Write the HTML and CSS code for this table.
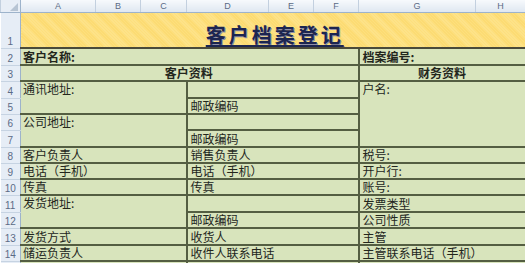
FILE: index.html
```html
<!DOCTYPE html>
<html lang="zh">
<head>
<meta charset="utf-8">
<title>客户档案登记</title>
<link rel="stylesheet" href="styles.css">
</head>
<body>
<table class="sheet">
  <colgroup>
    <col class="w-rh"><col class="w-a"><col class="w-b"><col class="w-c"><col class="w-d"><col class="w-e"><col class="w-f"><col class="w-g"><col class="w-h">
  </colgroup>
  <tr class="hdr">
    <th class="corner"><span class="tri"></span></th>
    <th>A</th><th>B</th><th>C</th><th>D</th><th>E</th><th>F</th><th>G</th><th>H</th>
  </tr>
  <tr class="r-title">
    <th class="rn">1</th>
    <td colspan="8" class="title"><span>客户档案登记</span></td>
  </tr>
  <tr class="h17">
    <th class="rn">2</th>
    <td colspan="6" class="nl bold">客户名称:</td>
    <td colspan="2" class="bold">档案编号:</td>
  </tr>
  <tr class="h16">
    <th class="rn">3</th>
    <td colspan="6" class="nl bold center">客户资料</td>
    <td colspan="2" class="bold center">财务资料</td>
  </tr>
  <tr class="h17">
    <th class="rn">4</th>
    <td colspan="3" rowspan="2" class="nl top">通讯地址:</td>
    <td colspan="3"></td>
    <td colspan="2" rowspan="4" class="top">户名:</td>
  </tr>
  <tr class="h16">
    <th class="rn">5</th>
    <td colspan="3">邮政编码</td>
  </tr>
  <tr class="h16">
    <th class="rn">6</th>
    <td colspan="3" rowspan="2" class="nl top">公司地址:</td>
    <td colspan="3" class="thin-b"></td>
  </tr>
  <tr class="h17">
    <th class="rn">7</th>
    <td colspan="3">邮政编码</td>
  </tr>
  <tr class="h16">
    <th class="rn">8</th>
    <td colspan="3" class="nl">客户负责人</td>
    <td colspan="3">销售负责人</td>
    <td colspan="2">税号:</td>
  </tr>
  <tr class="h16">
    <th class="rn">9</th>
    <td colspan="3" class="nl">电话（手机）</td>
    <td colspan="3">电话（手机）</td>
    <td colspan="2">开户行:</td>
  </tr>
  <tr class="h16">
    <th class="rn">10</th>
    <td colspan="3" class="nl">传真</td>
    <td colspan="3">传真</td>
    <td colspan="2">账号:</td>
  </tr>
  <tr class="h17">
    <th class="rn">11</th>
    <td colspan="3" rowspan="2" class="nl top">发货地址:</td>
    <td colspan="3"></td>
    <td colspan="2">发票类型</td>
  </tr>
  <tr class="h16">
    <th class="rn">12</th>
    <td colspan="3">邮政编码</td>
    <td colspan="2">公司性质</td>
  </tr>
  <tr class="h17">
    <th class="rn">13</th>
    <td colspan="3" class="nl">发货方式</td>
    <td colspan="3">收货人</td>
    <td colspan="2">主管</td>
  </tr>
  <tr class="h16">
    <th class="rn">14</th>
    <td colspan="3" class="nl">储运负责人</td>
    <td colspan="3">收件人联系电话</td>
    <td colspan="2">主管联系电话（手机）</td>
  </tr>
  <tr class="h16">
    <th class="rn"></th>
    <td colspan="3" class="nl"></td>
    <td colspan="3"></td>
    <td colspan="2"></td>
  </tr>
</table>
</body>
</html>
```

FILE: styles.css
```css
html, body {
  margin: 0;
  padding: 0;
  background: #ffffff;
  overflow: hidden;
  width: 525px;
  height: 263px;
}

.sheet {
  border-collapse: collapse;
  table-layout: fixed;
  width: 525px;
  font-family: "Noto Sans CJK SC", "Noto Sans", sans-serif;
  font-size: 12px;
  color: #23261c;
}

.w-rh { width: 20px; }
.w-a { width: 75px; }
.w-b { width: 45px; }
.w-c { width: 46px; }
.w-d { width: 82px; }
.w-e { width: 45px; }
.w-f { width: 45px; }
.w-g { width: 117px; }
.w-h { width: 50px; }

/* column header row */
.hdr { height: 12px; }
.hdr th {
  padding: 0;
  height: 11px;
  font-family: "Liberation Sans", sans-serif;
  font-weight: normal;
  font-size: 9px;
  line-height: 10px;
  color: #5b6b86;
  text-align: center;
  background: linear-gradient(#f7f9fc, #dfe7f1);
  border-left: 1px solid #c3d0df;
  border-right: 1px solid #c3d0df;
  border-bottom: 1px solid #9db3cb;
}

.hdr th.corner {
  position: relative;
  background: #e8eef6;
  border-right: 1px solid #9db3cb;
}

.tri {
  position: absolute;
  right: 2px;
  bottom: 1px;
  width: 0;
  height: 0;
  border-left: 8px solid transparent;
  border-bottom: 8px solid #b7c4d3;
}

/* row numbers */
th.rn {
  padding: 0 0 1px 0;
  font-family: "Liberation Sans", sans-serif;
  font-weight: normal;
  font-size: 10px;
  line-height: 10px;
  color: #5b6b86;
  text-align: center;
  vertical-align: bottom;
  background: #e6edf6;
  border-top: 1px solid #c6d3e2;
  border-bottom: 1px solid #c6d3e2;
  border-right: 1px solid #9db3cb;
}

.r-title { height: 36px; }
.h17 { height: 17px; }
.h16 { height: 16px; }

td {
  padding: 0 3px;
  white-space: nowrap;
  overflow: hidden;
  line-height: 12px;
  vertical-align: middle;
  background: #d8e4bc;
  border: 2px solid #545e42;
}

td.nl { border-left: none; padding-left: 2px; }
td.top { vertical-align: top; padding-top: 1px; }
td.center { text-align: center; }
td.bold { font-weight: 700; }
td.thin-b { border-bottom: 1px solid #6d7758; }

td.title {
  border: none;
  border-bottom: 2px solid #4a4a3a;
  text-align: center;
  vertical-align: bottom;
  padding: 0 0 2px 0;
  background-color: #fcd868;
  background-image: repeating-linear-gradient(45deg, rgba(255, 244, 190, 0.5) 0 1px, transparent 1px 2px);
}

td.title span {
  font-size: 20px;
  font-weight: 700;
  line-height: 20px;
  letter-spacing: 3px;
  color: #1c2550;
  text-decoration: underline;
  text-decoration-thickness: 2px;
  text-underline-offset: 2px;
  text-shadow: 1px 1px 0 #8f90a8;
  padding-left: 3px;
}
```
